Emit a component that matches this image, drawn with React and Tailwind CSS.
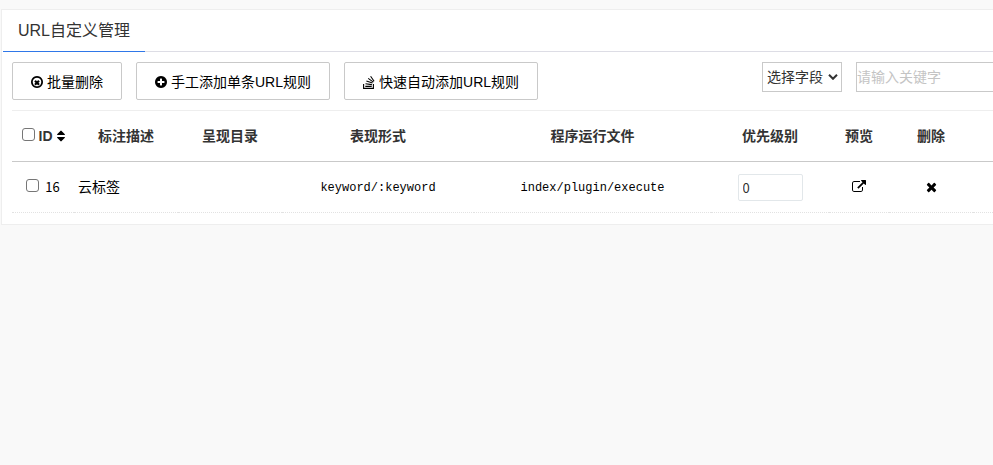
import React from 'react';
import clsx from 'clsx';

const ICONS = {
  timesCircle: {
    width: 1536,
    path: 'M1097 1175l-146 146q-10 10-23 10t-23-10l-137-137-137 137q-10 10-23 10t-23-10l-146-146q-10-10-10-23t10-23l137-137-137-137q-10-10-10-23t10-23l146-146q10-10 23-10t23 10l137 137 137-137q10-10 23-10t23 10l146 146q10 10 10 23t-10 23l-137 137 137 137q10 10 10 23t-10 23zm215-279q0-148-73-273t-198-198-273-73-273 73-198 198-73 273 73 273 198 198 273 73 273-73 198-198 73-273zm224 0q0 209-103 385.5t-279.5 279.5-385.5 103-385.5-103-279.5-279.5-103-385.5 103-385.5 279.5-279.5 385.5-103 385.5 103 279.5 279.5 103 385.5z',
  },
  plusCircle: {
    width: 1536,
    path: 'M1216 960v-128q0-26-19-45t-45-19h-256v-256q0-26-19-45t-45-19h-128q-26 0-45 19t-19 45v256h-256q-26 0-45 19t-19 45v128q0 26 19 45t45 19h256v256q0 26 19 45t45 19h128q26 0 45-19t19-45v-256h256q26 0 45-19t19-45zm320-64q0 209-103 385.5t-279.5 279.5-385.5 103-385.5-103-279.5-279.5-103-385.5 103-385.5 279.5-279.5 385.5-103 385.5 103 279.5 279.5 103 385.5z',
  },
  sort: {
    width: 1024,
    path: 'M1024 1088q0 26-19 45l-448 448q-19 19-45 19t-45-19l-448-448q-19-19-19-45t19-45 45-19h896q26 0 45 19t19 45zm0-384q0 26-19 45t-45 19h-896q-26 0-45-19t-19-45 19-45l448-448q19-19 45-19t45 19l448 448q19 19 19 45z',
  },
  externalLink: {
    width: 1792,
    path: 'M1408 928v320q0 119-84.5 203.5t-203.5 84.5h-832q-119 0-203.5-84.5t-84.5-203.5v-832q0-119 84.5-203.5t203.5-84.5h704q14 0 23 9t9 23v64q0 14-9 23t-23 9h-704q-66 0-113 47t-47 113v832q0 66 47 113t113 47h832q66 0 113-47t47-113v-320q0-14 9-23t23-9h64q14 0 23 9t9 23zm384-864v512q0 26-19 45t-45 19-45-19l-176-176-652 652q-10 10-23 10t-23-10l-114-114q-10-10-10-23t10-23l652-652-176-176q-19-19-19-45t19-45 45-19h512q26 0 45 19t19 45z',
  },
  times: {
    width: 1408,
    path: 'M1298 1322q0 40-28 68l-136 136q-28 28-68 28t-68-28l-294-294-294 294q-28 28-68 28t-68-28l-136-136q-28-28-28-68t28-68l294-294-294-294q-28-28-28-68t28-68l136-136q28-28 68-28t68 28l294 294 294-294q28-28 68-28t68 28l136 136q28 28 28 68t-28 68l-294 294 294 294q28 28 28 68z',
  },
};

const Icon = ({ name, className }) => (
  <svg
    viewBox={`0 0 ${ICONS[name].width} 1792`}
    fill="currentColor"
    aria-hidden="true"
    className={clsx('h-3.5 w-auto shrink-0', className)}
  >
    <path d={ICONS[name].path} />
  </svg>
);

// Tray with a fan of sheets falling into it
const StackIcon = () => (
  <svg viewBox="0 0 12 14" fill="none" stroke="currentColor" aria-hidden="true" className="w-3 h-3.5 shrink-0">
    <path d="M0.6 9v4.4h9.8V9" strokeWidth="1.1" />
    <path d="M2.3 11.4h6.4M2.5 8.8l6.4 0.8M3.4 6.1l6.1 2M5.2 3.4l5.2 3.7M7.6 1.2l3.5 5" strokeWidth="1.1" />
  </svg>
);

const ActionButton = ({ icon, children }) => (
  <button
    type="button"
    className="flex items-center gap-1 h-[38px] px-[18px] pt-px bg-white border border-[#c9c9c9] rounded-xs text-sm text-black whitespace-nowrap"
  >
    {icon}
    <span className="pt-px">{children}</span>
  </button>
);

const Checkbox = ({ label }) => (
  <input
    type="checkbox"
    aria-label={label}
    className="size-[13px] shrink-0 mb-1 appearance-none bg-white border border-[#767676] rounded-[3px] checked:bg-blue-600"
  />
);

const COLUMNS = [
  { title: '标注描述', width: 'w-[104px]' },
  { title: '呈现目录', width: 'w-[104px]' },
  { title: '表现形式', width: 'w-[192px]' },
  { title: '程序运行文件', width: 'w-[237px]' },
  { title: '优先级别', width: 'w-[118px]' },
  { title: '预览', width: 'w-[60px]' },
  { title: '删除', width: 'w-[84px]' },
];

const RULES = [
  { id: 16, desc: '云标签', dir: '', pattern: 'keyword/:keyword', target: 'index/plugin/execute', priority: 0 },
];

export default function App() {
  return (
    <div className="min-h-screen pt-[9px] pl-px overflow-x-hidden bg-[#f9f9f9] text-sm text-[#333] font-['Liberation_Sans','Noto_Sans_CJK_SC',sans-serif]">
      <main className="bg-white border border-r-0 border-[#eee] pb-[11px]">
        <header className="flex h-[42px] border-b border-[#dddde5] ml-px">
          <h1 className="h-[42px] px-[15px] border-b border-[#2f77e8] text-base leading-[42px] whitespace-nowrap">
            URL自定义管理
          </h1>
        </header>

        <div className="pl-2.5">
          <div className="flex items-start justify-between gap-4 pt-2.5 pb-2.5">
            <div className="flex gap-3.5">
              <ActionButton icon={<Icon name="timesCircle" />}>批量删除</ActionButton>
              <ActionButton icon={<Icon name="plusCircle" />}>手工添加单条URL规则</ActionButton>
              <ActionButton icon={<StackIcon />}>快速自动添加URL规则</ActionButton>
            </div>
            <form className="flex gap-3.5">
              <div className="relative">
                <select
                  aria-label="选择字段"
                  className="appearance-none h-[30px] w-20 pl-1 bg-white border border-[#c9c9c9] text-sm text-[#333]"
                >
                  <option>选择字段</option>
                </select>
                <svg
                  viewBox="0 0 10 6"
                  fill="none"
                  stroke="#333"
                  strokeWidth="2"
                  className="absolute right-1 top-3 w-2.5 h-1.5 pointer-events-none"
                >
                  <path d="M1 0.8l4 4 4-4" />
                </svg>
              </div>
              <input
                type="text"
                aria-label="关键字"
                placeholder="请输入关键字"
                className="h-[30px] w-[137px] border border-r-0 border-[#c9c9c9] bg-white text-sm placeholder:text-[#c4c4c4]"
              />
            </form>
          </div>

          <table className="w-full table-fixed border-separate border-spacing-0">
            <thead>
              <tr className="h-[52px]">
                <th className="w-[62px] p-0 border-t border-b border-t-[#eee] border-b-[#c9c9c9]">
                  <div className="flex items-center justify-center gap-1">
                    <Checkbox label="全选" />
                    <span>ID</span>
                    <Icon name="sort" className="text-black" />
                  </div>
                </th>
                {COLUMNS.map((col) => (
                  <th
                    key={col.title}
                    className={clsx('p-0 border-t border-b border-t-[#eee] border-b-[#c9c9c9] font-bold', col.width)}
                  >
                    {col.title}
                  </th>
                ))}
                <td className="border-t border-b border-t-[#eee] border-b-[#c9c9c9]" />
              </tr>
            </thead>
            <tbody>
              {RULES.map((rule) => (
                <tr
                  key={rule.id}
                  className="h-[51px] text-center text-black [&>td]:p-0 [&>td]:border-b [&>td]:border-dotted [&>td]:border-[#e2e2e2]"
                >
                  <td>
                    <div className="flex items-center justify-center gap-1.5 text-[13px]">
                      <Checkbox label={`选择 ${rule.id}`} />
                      <span className="pt-px font-['Noto_Sans_CJK_SC',sans-serif]">{rule.id}</span>
                    </div>
                  </td>
                  <td>
                    <div className="pl-1 text-left">{rule.desc}</div>
                  </td>
                  <td>{rule.dir}</td>
                  <td className="font-['Liberation_Mono',monospace] text-xs">
                    <div className="pt-0.5">{rule.pattern}</div>
                  </td>
                  <td className="font-['Liberation_Mono',monospace] text-xs">
                    <div className="pt-0.5">{rule.target}</div>
                  </td>
                  <td>
                    <input
                      type="text"
                      aria-label="优先级别"
                      defaultValue={rule.priority}
                      className="block mx-auto h-[27px] w-[65px] px-1 border border-[#e2e7ea] rounded-xs text-[13px] text-[#333] font-['Noto_Sans_CJK_SC',sans-serif]"
                    />
                  </td>
                  <td>
                    <a href="#preview" aria-label="预览" className="flex justify-center">
                      <Icon name="externalLink" />
                    </a>
                  </td>
                  <td>
                    <button type="button" aria-label="删除" className="block mx-auto">
                      <Icon name="times" />
                    </button>
                  </td>
                  <td />
                </tr>
              ))}
            </tbody>
          </table>
        </div>
      </main>
    </div>
  );
}
